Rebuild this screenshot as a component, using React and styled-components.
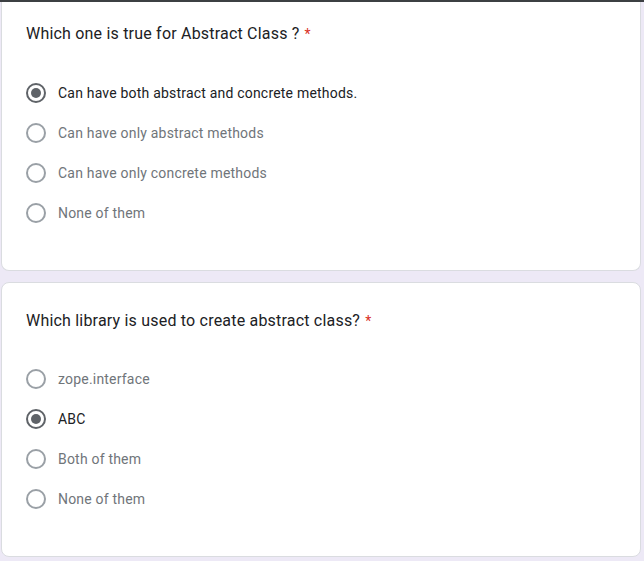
import React from 'react';
import styled, { createGlobalStyle } from 'styled-components';

const GlobalStyle = createGlobalStyle`
  body {
    margin: 0;
    background: #ede9f6;
    font-family: Roboto, Arial, sans-serif;
  }
`;

const Page = styled.div`
  display: flex;
  flex-direction: column;
  gap: 11px;
  padding: 0 3px 0 1px;
  min-height: 561px;
  box-sizing: border-box;
`;

const TopStrip = styled.div`
  height: 2px;
  background: #3c4043;
  margin: 0 -3px -11px -1px;
`;

const Card = styled.div`
  background: #fff;
  border: 1px solid #dadce0;
  border-radius: ${(p) => (p.$first ? '0 0 8px 8px' : '8px')};
  border-top: ${(p) => (p.$first ? 'none' : '1px solid #dadce0')};
  padding: ${(p) => (p.$first ? '20px' : '26px')} 24px 37px 24px;
`;

const Question = styled.div`
  font-family: Roboto, Arial, sans-serif;
  font-size: 16px;
  line-height: 24px;
  color: #202124;
  letter-spacing: 0.2px;
  margin-bottom: ${(p) => (p.$first ? '27px' : '26px')};
`;

const Star = styled.span`
  color: #d93025;
  margin-left: 5px;
  font-size: 14px;
`;

const Options = styled.div`
  display: flex;
  flex-direction: column;
`;

const Option = styled.label`
  display: flex;
  align-items: center;
  height: 40px;
  gap: 12px;
  font-size: 14px;
  letter-spacing: 0.2px;
  color: ${(p) => (p.$checked ? '#202124' : '#70757a')};
`;

const Radio = styled.span`
  width: 20px;
  height: 20px;
  box-sizing: border-box;
  border-radius: 50%;
  border: 2px solid ${(p) => (p.$checked ? '#5f6368' : '#9aa0a6')};
  display: flex;
  align-items: center;
  justify-content: center;
  flex-shrink: 0;

  &::after {
    content: '';
    width: 10px;
    height: 10px;
    border-radius: 50%;
    background: #5f6368;
    display: ${(p) => (p.$checked ? 'block' : 'none')};
  }
`;

const questions = [
  {
    title: 'Which one is true for Abstract Class ?',
    options: [
      'Can have both abstract and concrete methods.',
      'Can have only abstract methods',
      'Can have only concrete methods',
      'None of them',
    ],
    selected: 0,
  },
  {
    title: 'Which library is used to create abstract class?',
    options: ['zope.interface', 'ABC', 'Both of them', 'None of them'],
    selected: 1,
  },
];

export default function App() {
  return (
    <>
      <GlobalStyle />
      <Page>
        <TopStrip />
        {questions.map((q, qi) => (
          <Card key={q.title} $first={qi === 0}>
            <Question $first={qi === 0}>
              {q.title}
              <Star>*</Star>
            </Question>
            <Options>
              {q.options.map((opt, i) => (
                <Option key={opt} $checked={i === q.selected}>
                  <Radio $checked={i === q.selected} />
                  {opt}
                </Option>
              ))}
            </Options>
          </Card>
        ))}
      </Page>
    </>
  );
}
